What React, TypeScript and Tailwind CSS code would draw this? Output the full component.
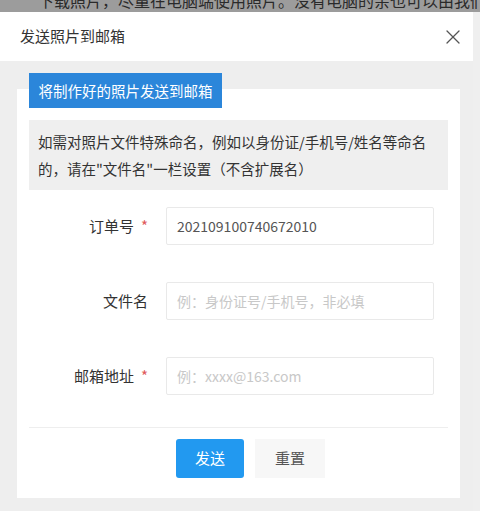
import React from "react";
import { X } from "lucide-react";

const font = { fontFamily: '"Noto Sans CJK SC", "Noto Sans", sans-serif' };

const fields = [
  { label: "订单号", required: true, value: "202109100740672010", placeholder: "" },
  { label: "文件名", required: false, value: "", placeholder: "例：身份证号/手机号，非必填" },
  { label: "邮箱地址", required: true, value: "", placeholder: "例：xxxx@163.com" },
];

export default function App() {
  return (
    <div
      className="w-[480px] h-[511px] overflow-hidden bg-[#efefef] flex flex-col"
      style={font}
    >
      {/* page behind the overlay */}
      <div className="h-[12px] bg-[#9c9c9c] flex overflow-hidden shrink-0">
        <div className="ml-[17px] w-[4px] h-full bg-[#3f7f3f]" />
        <div className="ml-[21px] -mt-[11px] text-[16px] leading-[22px] text-[#2a2a2a] whitespace-nowrap">
          下载照片，尽量在电脑端使用照片。没有电脑的亲也可以由我们
        </div>
      </div>

      <div className="w-[473px] flex-1 flex flex-col">
        <div className="h-[49px] bg-white flex items-center justify-between pl-[20px] pr-[8px] shrink-0">
          <span className="text-[15px] text-[#333]">发送照片到邮箱</span>
          <X size={24} strokeWidth={1.3} className="text-[#555]" />
        </div>

        <div className="flex-1 bg-[#eeeeee] pl-[17px] pr-[13px] pt-[12px]">
          <div className="relative z-10 ml-[12px] w-[193px] h-[35px] bg-[#2b86da] text-white text-[14.5px] flex items-center justify-center">
            将制作好的照片发送到邮箱
          </div>
          <div className="-mt-[19px] bg-white px-[12px] pt-[31px] pb-[20px]">
            <div className="bg-[#efefef] px-[9px] py-[8px] text-[14.5px] leading-[27px] text-[#333]">
              如需对照片文件特殊命名，例如以身份证/手机号/姓名等命名的，请在"文件名"一栏设置（不含扩展名）
            </div>

            <div className="mt-[17px] flex flex-col gap-[37px]">
              {fields.map((f) => (
                <div key={f.label} className="flex items-center">
                  <div className="w-[119px] text-right text-[15px] text-[#333]">
                    {f.label}
                    {f.required && <span className="ml-[7px] text-[#e0595b]">*</span>}
                  </div>
                  <input
                    readOnly
                    value={f.value}
                    placeholder={f.placeholder}
                    className="ml-[18px] w-[268px] h-[38px] border border-[#e9e9e9] rounded-[2px] px-[10px] text-[14px] text-[#555] placeholder:text-[#c8c8c8] outline-none"
                    style={font}
                  />
                </div>
              ))}
            </div>

            <div className="mt-[32px] h-px bg-[#eeeeee]" />

            <div className="mt-[11px] pl-[147px] flex gap-[11px]">
              <button className="w-[68px] h-[39px] rounded-[3px] bg-[#2299f0] text-white text-[15px]">
                发送
              </button>
              <button className="w-[70px] h-[39px] bg-[#f7f7f7] text-[#555] text-[15px]">
                重置
              </button>
            </div>
          </div>
        </div>
      </div>
    </div>
  );
}
